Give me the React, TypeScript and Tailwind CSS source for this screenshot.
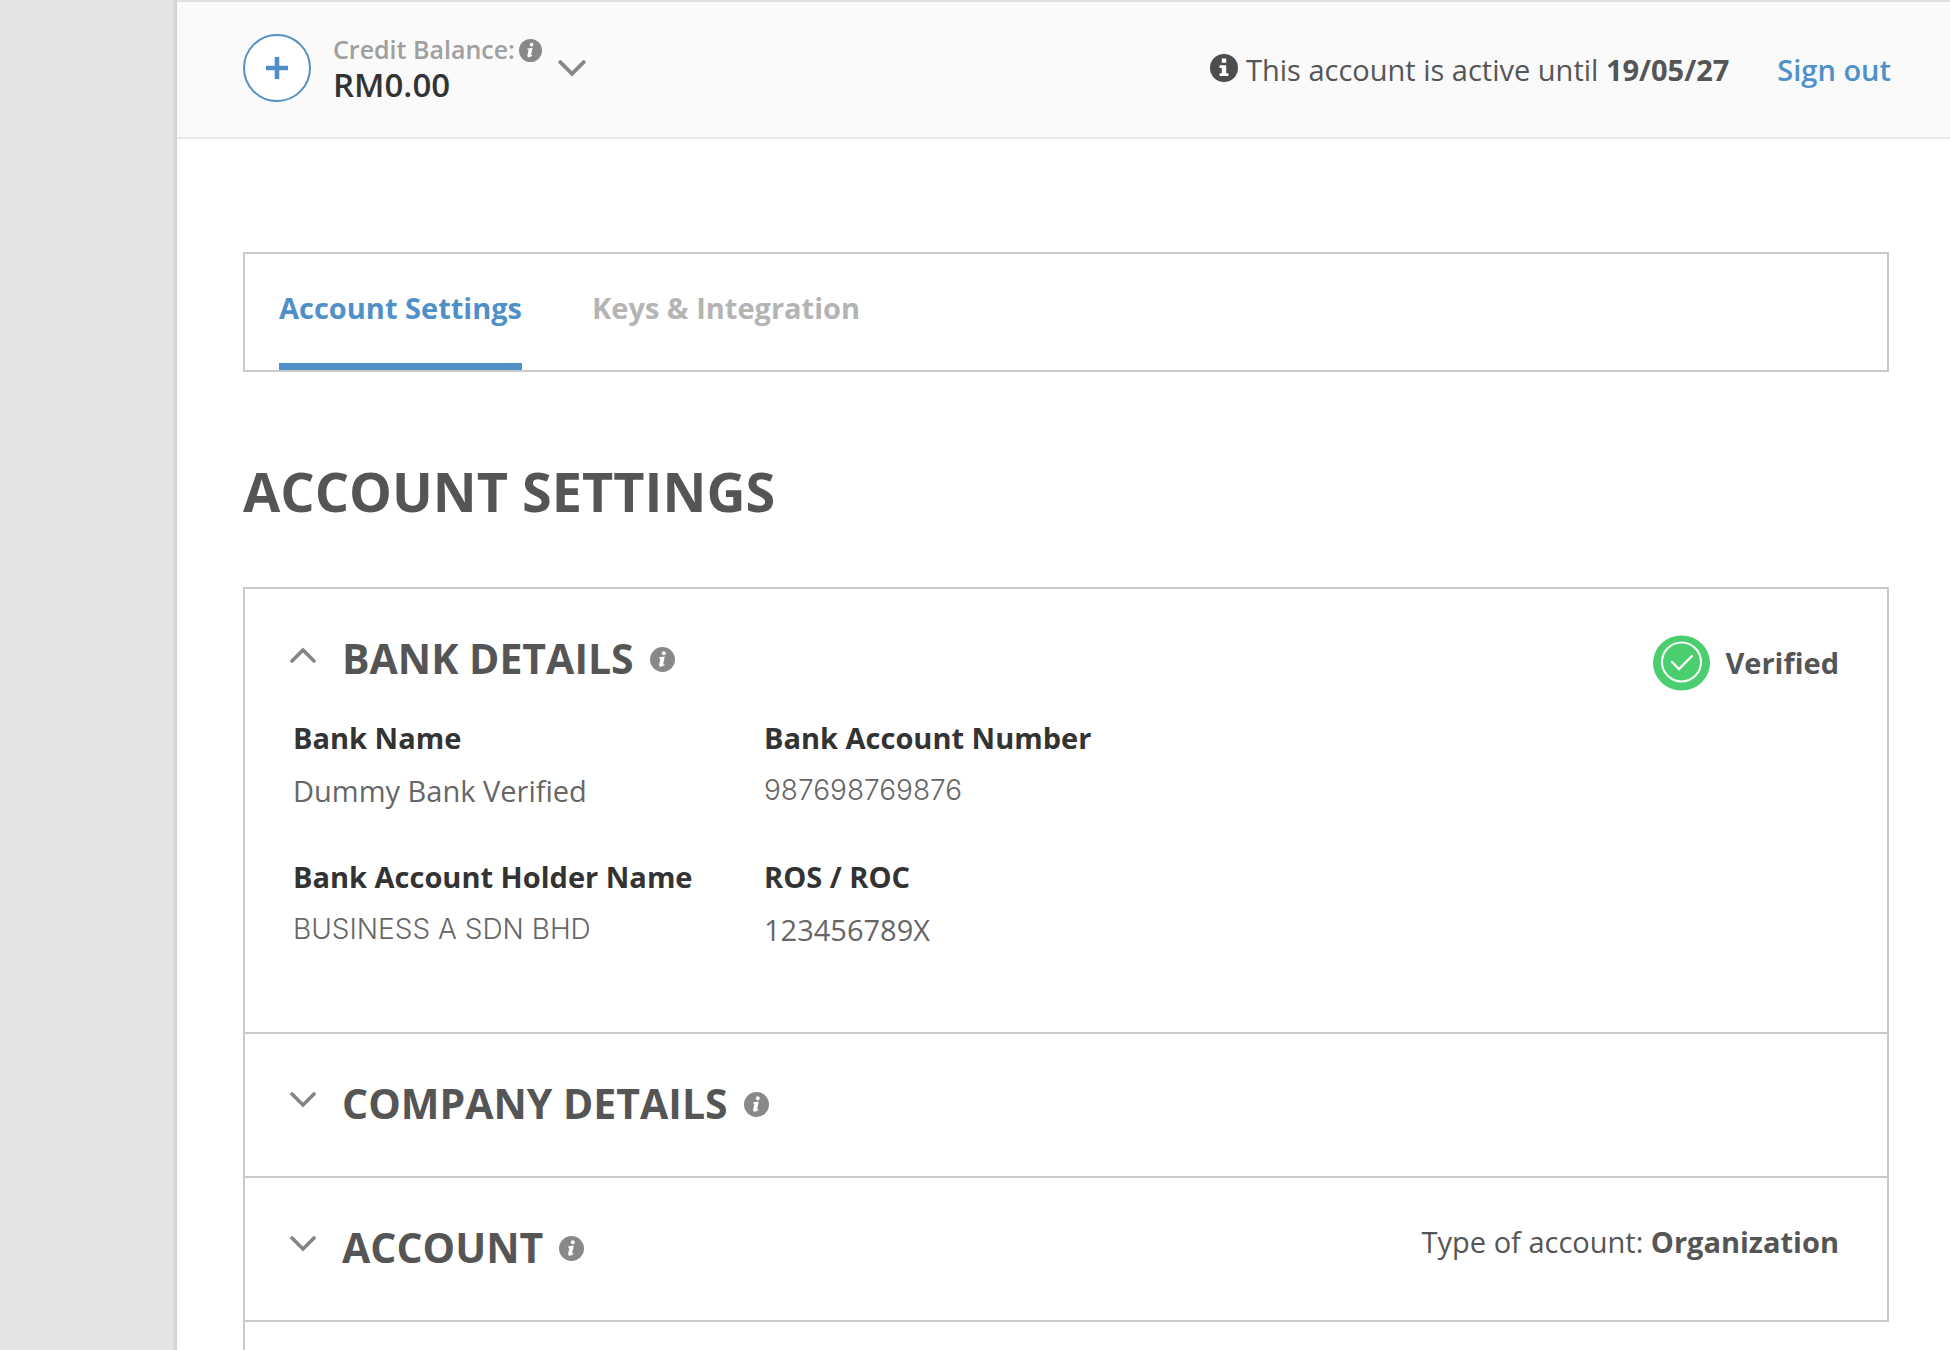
import React, { useState } from 'react';

const TABS = ['Account Settings', 'Keys & Integration'];

const BANK_FIELDS = [
  { label: 'Bank Name', value: 'Dummy Bank Verified' },
  { label: 'Bank Account Number', value: '987698769876', plain: true },
  { label: 'Bank Account Holder Name', value: 'BUSINESS A SDN BHD', plain: true },
  { label: 'ROS / ROC', value: '123456789X' },
];

interface IconProps {
  className?: string;
}

function InfoItalicIcon({ className = '' }: IconProps) {
  return (
    <svg viewBox="0 0 24 24" className={className} aria-hidden="true">
      <circle cx="12" cy="12" r="12" fill="currentColor" />
      <circle cx="13.2" cy="5.9" r="1.9" fill="#fff" />
      <path
        d="M9 9.8 L14.2 9 L12.6 16.4 Q12.6 17.3 14.1 16.4 L13.7 17.6 Q11.6 19.2 9.9 19 Q8.4 18.7 8.8 16.9 L10 11.3 L8.7 11 Z"
        fill="#fff"
      />
    </svg>
  );
}

function InfoIcon({ className = '' }: IconProps) {
  return (
    <svg viewBox="0 0 28 28" className={className} aria-hidden="true">
      <circle cx="14" cy="14" r="14" fill="currentColor" />
      <path
        d="M11.8 4.6 H16.2 V8.8 H11.8 Z M9.6 11.2 H16.2 V19.2 H18.4 V22 H9.6 V19.2 H11.8 V14 H9.6 Z"
        fill="#fff"
      />
    </svg>
  );
}

function ChevronIcon({ className = '' }: IconProps) {
  return (
    <svg
      viewBox="0 0 26 16"
      className={className}
      fill="none"
      stroke="currentColor"
      strokeLinecap="round"
      aria-hidden="true"
    >
      <path d="M2 2 L13 13 L24 2" strokeWidth="3.6" />
    </svg>
  );
}

function VerifiedIcon({ className = '' }: IconProps) {
  return (
    <svg viewBox="0 0 57 56" className={className} fill="none" aria-hidden="true">
      <ellipse cx="28.5" cy="28" rx="28.5" ry="27.5" fill="#4bce6d" />
      <circle cx="28.5" cy="27" r="19.5" stroke="#fff" strokeWidth="2" />
      <path
        d="M19 27 L26 34 L39 21"
        stroke="#fff"
        strokeWidth="2.4"
        strokeLinecap="round"
      />
    </svg>
  );
}

interface SectionProps {
  title: string;
  defaultOpen?: boolean;
  aside?: React.ReactNode;
  children?: React.ReactNode;
}

function Section({ title, defaultOpen = false, aside, children }: SectionProps) {
  const [open, setOpen] = useState<boolean>(defaultOpen);

  return (
    <section className="border-b-2 border-[#c9c9c9] pl-[45px] pr-12 pt-[41px]">
      <div className="flex items-start justify-between">
        <h2 className="flex items-center text-[41px] font-bold leading-[56px] text-[#555]">
          <button
            type="button"
            className="flex items-center"
            aria-expanded={open}
            onClick={() => setOpen(!open)}
          >
            <ChevronIcon
              className={`mb-1.5 mr-[26px] h-4 w-[26px] text-[#858585] ${
                open ? 'rotate-180' : ''
              }`}
            />
            {title}
          </button>
          <InfoItalicIcon className="ml-4 mt-0.5 size-[25px] text-[#888]" />
        </h2>
        {aside}
      </div>
      {open && children ? children : <div className="h-[45px]" />}
    </section>
  );
}

export default function App() {
  const [tab, setTab] = useState<string>(TABS[0]);

  return (
    <div className="flex h-screen overflow-hidden bg-white font-['Open_Sans',sans-serif] text-[#555]">
      <aside className="w-[177px] shrink-0 bg-linear-to-r from-[#e4e4e4] from-97% to-[#cecece]" />
      <div className="min-w-0 flex-1">
        <header className="flex h-[139px] items-center justify-between border-b-2 border-t-2 border-b-[#e9e9e9] border-t-[#e0e0e0] bg-[#fafafa] pl-[66px] pr-[59px]">
          <div className="mb-1 flex items-center">
            <button
              type="button"
              aria-label="Add credit"
              className="flex size-[68px] items-center justify-center rounded-full border-2 border-[#5090c8] bg-white"
            >
              <svg viewBox="0 0 22 22" className="size-[22px]" aria-hidden="true">
                <path d="M11 0 V22 M0 11 H22" stroke="#4f8fc7" strokeWidth="4.6" />
              </svg>
            </button>
            <div className="ml-[22px]">
              <p className="flex items-center text-[25px] font-semibold leading-[35px] text-[#a0a0a0]">
                Credit Balance:
                <InfoItalicIcon className="ml-1 mt-0.5 size-[23px] text-[#888]" />
              </p>
              <p className="text-[33px] font-semibold leading-[36px] text-[#333]">
                RM0.00
              </p>
            </div>
            <button type="button" aria-label="Show balance" className="ml-4 mt-0.5">
              <ChevronIcon className="h-[17px] w-[28px] text-[#888]" />
            </button>
          </div>
          <div className="flex items-center text-[29px] leading-10">
            <InfoIcon className="mb-1 size-7 text-[#4d4d4d]" />
            <p className="ml-2">
              This account is active until <b>19/05/27</b>
            </p>
            <a href="#sign-out" className="ml-12 font-semibold text-[#4f90c9]">
              Sign out
            </a>
          </div>
        </header>

        <main className="pl-[66px] pr-[61px] pt-[113px]">
          <nav className="flex h-[120px] gap-[70px] border-2 border-[#c9c9c9] px-[34px]">
            {TABS.map((name) => (
              <button
                type="button"
                key={name}
                onClick={() => setTab(name)}
                className={`border-b-[7px] pb-0.5 text-[29px] font-bold ${
                  tab === name
                    ? 'border-[#4f90c6] text-[#4f90c9]'
                    : 'border-transparent text-[#b4b4b4]'
                }`}
              >
                {name}
              </button>
            ))}
          </nav>

          <h1 className="mt-[79px] text-[54px] font-bold leading-[80px]">
            ACCOUNT SETTINGS
          </h1>

          <div className="mt-14 border-x-2 border-t-2 border-[#c9c9c9]">
            <Section
              title="BANK DETAILS"
              defaultOpen
              aside={
                <p className="mt-[5px] flex items-center text-[29px] font-bold leading-10">
                  <VerifiedIcon className="mr-[15px] h-14 w-[57px]" />
                  Verified
                </p>
              }
            >
              <dl className="grid grid-cols-[471px_1fr] gap-y-[33px] pb-[76px] pl-[3px] pt-5 text-[29px] leading-[53px]">
                {BANK_FIELDS.map(({ label, value, plain }) => (
                  <div key={label}>
                    <dt className="font-bold text-[#333]">{label}</dt>
                    <dd
                      className={`text-[#666] ${
                        plain
                          ? "font-['Inter',sans-serif] text-[28px] font-light"
                          : ''
                      }`}
                    >
                      {value}
                    </dd>
                  </div>
                ))}
              </dl>
            </Section>
            <Section title="COMPANY DETAILS" />
            <Section
              title="ACCOUNT"
              aside={
                <p className="mt-[3px] text-[29px] leading-10">
                  Type of account: <b>Organization</b>
                </p>
              }
            />
          </div>
          <div className="h-40 border-l-2 border-[#c9c9c9]" />
        </main>
      </div>
    </div>
  );
}
